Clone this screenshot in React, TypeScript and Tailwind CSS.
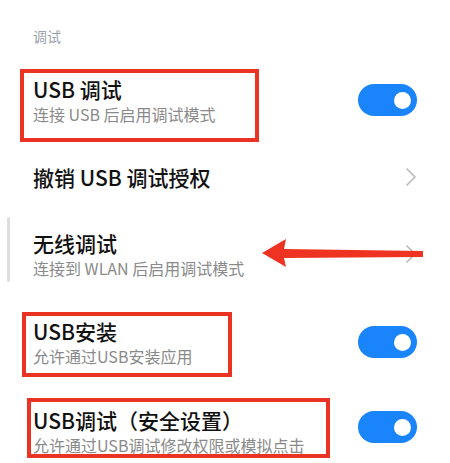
import React from "react";

const font = { fontFamily: '"Noto Sans CJK SC", "Noto Sans", sans-serif' };

const Toggle = ({ className = "" }: { className?: string }) => (
  <div className={`relative h-[32px] w-[59px] shrink-0 rounded-full bg-[#1a84fb] ${className}`}>
    <div className="absolute right-[6px] top-[7.5px] h-[17px] w-[17px] rounded-full bg-white" />
  </div>
);

const Chevron = () => (
  <svg width="12" height="20" viewBox="0 0 12 20" className="shrink-0">
    <polyline
      points="2,2 10,10 2,18"
      fill="none"
      stroke="#b8b8b8"
      strokeWidth="1.6"
      strokeLinecap="round"
      strokeLinejoin="round"
    />
  </svg>
);

interface RowProps {
  title: string;
  subtitle?: string;
  right: React.ReactNode;
  heightClass: string;
  textClass?: string;
  box?: string;
  children?: React.ReactNode;
}

const Row: React.FC<RowProps> = ({ title, subtitle, right, heightClass, textClass = "", box, children }) => (
  <div className={`relative flex items-center justify-between pl-[33px] pr-[33px] ${heightClass}`}>
    <div className={`flex flex-col ${textClass}`}>
      <span className="text-[21px] leading-[28px] font-medium text-[#111111]">{title}</span>
      {subtitle && <span className="text-[16px] leading-[22px] text-[#8a8a8a]">{subtitle}</span>}
    </div>
    {right}
    {box && <div className={`pointer-events-none absolute border-[4px] border-[#ea3323] ${box}`} />}
    {children}
  </div>
);

export default function App() {
  return (
    <div className="relative min-h-[463px] w-[450px] overflow-hidden bg-white" style={font}>
      <div className="pl-[33px] pt-[26px] text-[14px] leading-[20px] text-[#9aa1ad]">调试</div>

      <Row
        title="USB 调试"
        subtitle="连接 USB 后启用调试模式"
        right={<Toggle />}
        heightClass="h-[108px]"
        box="left-[20px] top-[23px] h-[73px] w-[239px]"
      />

      <Row title="撤销 USB 调试授权" right={<Chevron />} heightClass="h-[46px]" />

      <Row
        title="无线调试"
        subtitle="连接到 WLAN 后启用调试模式"
        right={<Chevron />}
        heightClass="h-[108px]"
      >
        <svg
          width="166"
          height="34"
          viewBox="0 0 166 34"
          className="pointer-events-none absolute left-[260px] top-[36px]"
        >
          <polygon points="2,17 26,3 24,13 163,15 163,21 24,22 26,31" fill="#ee3322" />
        </svg>
      </Row>

      <Row
        title="USB安装"
        subtitle="允许通过USB安装应用"
        right={<Toggle />}
        heightClass="h-[68px]"
        box="left-[22px] top-[4px] h-[65px] w-[210px]"
      />

      <Row
        title="USB调试（安全设置）"
        subtitle="允许通过USB调试修改权限或模拟点击"
        right={<Toggle className="-mt-[6px]" />}
        heightClass="h-[108px]"
        textClass="mt-[2px]"
        box="left-[27px] top-[22px] h-[60px] w-[303px]"
      />

      <div className="absolute left-[7px] top-[217px] h-[65px] w-[3px] rounded-full bg-[#dedede]" />
    </div>
  );
}
